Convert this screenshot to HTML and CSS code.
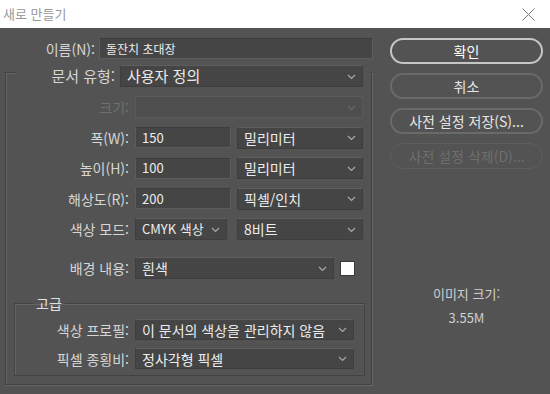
FILE: index.html
```html
<!DOCTYPE html>
<html lang="ko">
<head>
    <meta charset="UTF-8">
    <title>새로 만들기</title>
    <link rel="stylesheet" href="styles.css">
</head>
<body>

    <div class="titlebar">
        <span class="title">새로 만들기</span>
        <svg class="close" width="13" height="13" viewBox="0 0 13 13">
            <path d="M0.5 0.5 L12.5 12.5 M12.5 0.5 L0.5 12.5" stroke="#7a7a7a" stroke-width="1" fill="none"/>
        </svg>
    </div>

    <div class="dialog">
        <div class="form">
            <div class="row row-name">
                <span class="label">이름(N):</span>
                <div class="field field-name">돌잔치 초대장</div>
            </div>

            <div class="frame">
                <div class="row row-type">
                    <span class="label label-type">문서 유형:</span>
                    <div class="select select-type">사용자 정의<svg class="chev" width="9" height="6" viewBox="0 0 9 6"><polyline points="1,1 4.5,4.5 8,1" fill="none" stroke="#a8a8a8" stroke-width="1.2"/></svg></div>
                </div>

                <div class="rows">
                    <div class="row">
                        <span class="label disabled">크기:</span>
                        <div class="select select-size is-disabled"><svg class="chev" width="9" height="6" viewBox="0 0 9 6"><polyline points="1,1 4.5,4.5 8,1" fill="none" stroke="#6a6a6a" stroke-width="1.2"/></svg></div>
                    </div>
                    <div class="row">
                        <span class="label">폭(W):</span>
                        <div class="field field-num">150</div>
                        <div class="select select-unit">밀리미터<svg class="chev" width="9" height="6" viewBox="0 0 9 6"><polyline points="1,1 4.5,4.5 8,1" fill="none" stroke="#a8a8a8" stroke-width="1.2"/></svg></div>
                    </div>
                    <div class="row">
                        <span class="label">높이(H):</span>
                        <div class="field field-num">100</div>
                        <div class="select select-unit">밀리미터<svg class="chev" width="9" height="6" viewBox="0 0 9 6"><polyline points="1,1 4.5,4.5 8,1" fill="none" stroke="#a8a8a8" stroke-width="1.2"/></svg></div>
                    </div>
                    <div class="row">
                        <span class="label">해상도(R):</span>
                        <div class="field field-num">200</div>
                        <div class="select select-unit">픽셀/인치<svg class="chev" width="9" height="6" viewBox="0 0 9 6"><polyline points="1,1 4.5,4.5 8,1" fill="none" stroke="#a8a8a8" stroke-width="1.2"/></svg></div>
                    </div>
                    <div class="row">
                        <span class="label">색상 모드:</span>
                        <div class="select select-mode">CMYK 색상<svg class="chev" width="9" height="6" viewBox="0 0 9 6"><polyline points="1,1 4.5,4.5 8,1" fill="none" stroke="#a8a8a8" stroke-width="1.2"/></svg></div>
                        <div class="select select-unit">8비트<svg class="chev" width="9" height="6" viewBox="0 0 9 6"><polyline points="1,1 4.5,4.5 8,1" fill="none" stroke="#a8a8a8" stroke-width="1.2"/></svg></div>
                    </div>
                </div>

                <div class="row row-bg">
                    <span class="label">배경 내용:</span>
                    <div class="select select-bg">흰색<svg class="chev" width="9" height="6" viewBox="0 0 9 6"><polyline points="1,1 4.5,4.5 8,1" fill="none" stroke="#a8a8a8" stroke-width="1.2"/></svg></div>
                    <div class="swatch"></div>
                </div>

                <fieldset class="advanced">
                    <legend>고급</legend>
                    <div class="row">
                        <span class="label label-adv">색상 프로필:</span>
                        <div class="select select-adv">이 문서의 색상을 관리하지 않음<svg class="chev" width="9" height="6" viewBox="0 0 9 6"><polyline points="1,1 4.5,4.5 8,1" fill="none" stroke="#a8a8a8" stroke-width="1.2"/></svg></div>
                    </div>
                    <div class="row">
                        <span class="label label-adv">픽셀 종횡비:</span>
                        <div class="select select-adv">정사각형 픽셀<svg class="chev" width="9" height="6" viewBox="0 0 9 6"><polyline points="1,1 4.5,4.5 8,1" fill="none" stroke="#a8a8a8" stroke-width="1.2"/></svg></div>
                    </div>
                </fieldset>
            </div>
        </div>

        <div class="side">
            <button class="btn btn-primary">확인</button>
            <button class="btn">취소</button>
            <button class="btn">사전 설정 저장(S)...</button>
            <button class="btn" disabled>사전 설정 삭제(D)...</button>

            <div class="info">
                <p>이미지 크기:</p>
                <p>3.55M</p>
            </div>
        </div>
    </div>

</body>
</html>
```

FILE: styles.css
```css
body {
    margin: 0;
    width: 550px;
    height: 394px;
    overflow: hidden;
    background-color: #535353;
    font-family: "Noto Sans CJK KR", "Noto Sans", sans-serif;
    font-size: 14px;
    color: #d6d6d6;
}
.titlebar {
    height: 28px;
    background-color: #fff;
    display: flex;
    align-items: center;
    justify-content: space-between;
    padding: 0 15px 0 3px;
}
.title {
    color: #979797;
    font-size: 13px;
    line-height: 16px;
}
.close {
    display: block;
}
.dialog {
    display: flex;
    padding-top: 10px;
}
.form {
    width: 385px;
}
.row {
    display: flex;
    align-items: center;
    gap: 6px;
    height: 21px;
}
.label {
    width: 123px;
    flex-shrink: 0;
    text-align: right;
    line-height: 16px;
    white-space: nowrap;
}
.label.disabled {
    color: #707070;
}
.field, .select {
    box-sizing: border-box;
    height: 21px;
    background-color: #454545;
    border: 1px solid #5c5c5c;
    border-top-color: #3e3e3e;
    color: #ececec;
    padding: 0 6px;
    display: flex;
    align-items: center;
    line-height: 16px;
    white-space: nowrap;
    font-size: 13px;
}
.select {
    height: 22px;
    padding-right: 6px;
    border-color: #3e3e3e;
    border-top-color: #5e5e5e;
    font-size: 14px;
}
.select.is-disabled {
    background-color: #4e4e4e;
    border-color: #5a5a5a;
}
.chev {
    flex-shrink: 0;
    margin: 1px 0 0 auto;
}

/* name row sits above the frame */
.row-name {
    gap: 4px;
}
.row-name .label {
    width: 95px;
}
.field-name {
    width: 274px;
    font-size: 12px;
}

.frame {
    margin: 13px 0 0 5px;
    width: 367px;
    box-sizing: border-box;
    border: 1px solid #424242;
    box-shadow: inset 1px 1px 0 #666, 1px 1px 0 #666;
    padding-bottom: 8px;
}
.row-type {
    margin: -8px 1px 0 11px;
    padding-right: 6px;
    height: 22px;
    gap: 5px;
    background-color: #535353;
}
.label-type {
    width: 98px;
    font-size: 15px;
}
.select-type {
    width: 243px;
    font-size: 15px;
}
.rows {
    margin-top: 9px;
    display: flex;
    flex-direction: column;
    gap: 8.5px;
}
.rows .row {
    height: 22px;
}
.select-size {
    width: 228px;
}
.field-num {
    width: 96px;
}
.select-unit {
    width: 126px;
}
.select-mode {
    width: 92px;
    margin-right: 4px;
    font-size: 13px;
}
.row-bg {
    margin-top: 17px;
    height: 22px;
}
.select-bg {
    width: 199px;
}
.swatch {
    width: 13px;
    height: 13px;
    background-color: #fff;
    border: 1px solid #3a3a3a;
}

.advanced {
    margin: 16px 0 0 8px;
    width: 351px;
    box-sizing: border-box;
    padding: 0 0 6px 0;
    border: 1px solid #424242;
    box-shadow: inset 1px 1px 0 #666;
}
.advanced legend {
    margin-left: 18px;
    padding: 0 3px;
    line-height: 16px;
    font-size: 14px;
    color: #e0e0e0;
}
.advanced .row {
    margin-top: 8px;
}
.label-adv {
    width: 114px;
}
.select-adv {
    width: 219px;
    height: 21px;
}

.side {
    padding-left: 5px;
    display: flex;
    flex-direction: column;
    gap: 9px;
}
.btn {
    width: 153px;
    height: 26px;
    border-radius: 13px;
    border: 2px solid #6a6a6a;
    background-color: #535353;
    color: #e6e6e6;
    font-family: inherit;
    font-size: 14px;
    line-height: 16px;
    padding: 0;
}
.btn-primary {
    border-color: #c6c6c6;
    color: #fff;
}
.btn:disabled {
    border: 1px solid #5e5e5e;
    color: #6e6e6e;
}
.info {
    margin-top: 108px;
    text-align: center;
    color: #cfcfcf;
    font-size: 13px;
}
.info p {
    margin: 0 0 8px;
    line-height: 16px;
}
```
